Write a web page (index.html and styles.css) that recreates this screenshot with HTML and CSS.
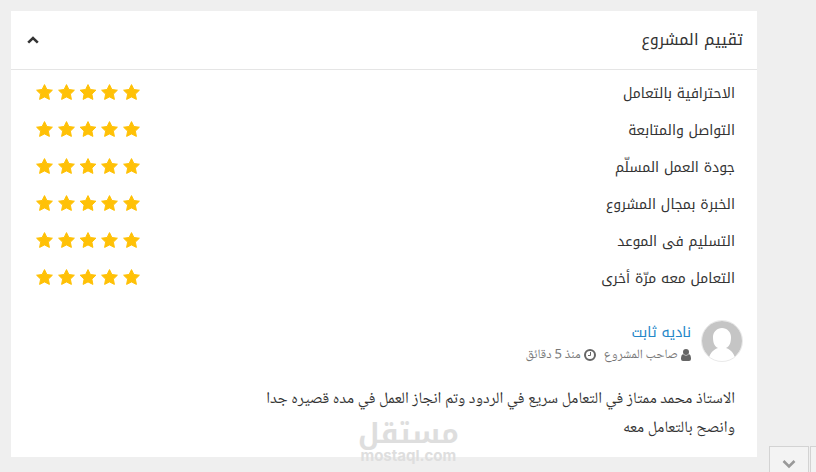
FILE: index.html
```html
<!DOCTYPE html>
<html lang="ar" dir="rtl">
<head>
<meta charset="utf-8">
<title>تقييم المشروع</title>
<link rel="stylesheet" href="styles.css">
</head>
<body>
<svg class="symbols" aria-hidden="true">
  <symbol id="star" viewBox="0 0 17 16"><path stroke-linejoin="round" stroke="#ffc107" d="M8.5 .6 L10.9 5.5 L16.4 6.2 L12.4 10.1 L13.4 15.4 L8.5 12.9 L3.6 15.4 L4.6 10.1 L.6 6.2 L6.1 5.5 Z"/></symbol>
  <symbol id="stars" viewBox="0 0 104 16">
    <use href="#star" x="0" width="17" height="16"/><use href="#star" x="22" width="17" height="16"/><use href="#star" x="43.5" width="17" height="16"/><use href="#star" x="65" width="17" height="16"/><use href="#star" x="87" width="17" height="16"/>
  </symbol>
</svg>
<main class="card">
  <header class="card-header">
    <h1 class="title">تقييم المشروع</h1>
    <button class="collapse" type="button" aria-label="طي">
      <svg width="12" height="8" viewBox="0 0 12 8"><path d="M1.2 6.6 L6 2 L10.8 6.6"/></svg>
    </button>
  </header>
  <ul class="ratings">
    <li class="rating"><span>الاحترافية بالتعامل</span><svg class="stars"><use href="#stars"/></svg></li>
    <li class="rating"><span>التواصل والمتابعة</span><svg class="stars"><use href="#stars"/></svg></li>
    <li class="rating"><span>جودة العمل المسلّم</span><svg class="stars"><use href="#stars"/></svg></li>
    <li class="rating"><span>الخبرة بمجال المشروع</span><svg class="stars"><use href="#stars"/></svg></li>
    <li class="rating"><span>التسليم فى الموعد</span><svg class="stars"><use href="#stars"/></svg></li>
    <li class="rating"><span>التعامل معه مرّة أخرى</span><svg class="stars"><use href="#stars"/></svg></li>
  </ul>
  <section class="review">
    <div class="author">
      <svg class="avatar" viewBox="0 0 42 42">
        <clipPath id="round"><circle cx="21" cy="21" r="20"/></clipPath>
        <circle cx="21" cy="21" r="20.5" fill="#fff" stroke="#e9e9e9"/>
        <g clip-path="url(#round)"><path fill="#c5c5c5" d="M0 0H42V42H35C34 35 31 30 25 28C29 26 30 22 30 17C30 12 26 8 21 8S12 12 12 17C12 22 13 26 17 28C11 30 8 35 7 42H0Z"/></g>
      </svg>
      <div class="who">
        <a class="name" href="#">ناديه ثابت</a>
        <div class="meta">
          <span class="meta-item"><svg width="10" height="12" viewBox="0 0 10 12"><circle cx="5" cy="3" r="3"/><path d="M2 5Q5 8 8 5Q10 6 10 9V10Q10 12 8 12H2Q0 12 0 10V9Q0 6 2 5Z"/></svg>صاحب المشروع</span>
          <span class="meta-item"><svg class="clock" width="12" height="12" viewBox="0 0 12 12"><circle cx="6" cy="6" r="5"/><path d="M6.5 3V6.5H4"/></svg>منذ 5 دقائق</span>
        </div>
      </div>
    </div>
    <p class="comment">الاستاذ محمد ممتاز في التعامل سريع في الردود وتم انجاز العمل في مده قصيره جدا<br>وانصح بالتعامل معه</p>
  </section>
  <div class="watermark"><span class="mark-ar">مستقل</span><span class="mark-en">mostaql.com</span></div>
</main>
<div class="dock">
  <button class="dock-button" type="button" aria-label="أسفل"><svg width="14" height="10" viewBox="0 0 14 10"><path d="M1.5 2 L7 7.5 L12.5 2"/></svg></button>
  <span class="dock-panel"></span>
</div>
</body>
</html>
```
FILE: styles.css
```css
* { box-sizing: border-box; }
body {
  margin: 0;
  padding: 11px 59px 0 11px;
  min-height: 100vh;
  overflow: hidden;
  background: #efefef;
  color: #333;
  font-family: "Noto Kufi Arabic", "Noto Sans", "DejaVu Sans", sans-serif;
  font-size: 14px;
}
.symbols { position: absolute; width: 0; height: 0; }
.card { position: relative; background: #fff; padding-bottom: 14px; }
.card-header {
  display: flex;
  align-items: center;
  justify-content: space-between;
  height: 59px;
  padding: 0 14px 0 16px;
  border-bottom: 1px solid #e5e5e5;
}
.title { margin: 0; padding-bottom: 2px; font-size: 16px; font-weight: 400; }
button { font: inherit; padding: 0; cursor: pointer; }
.collapse { display: flex; border: 0; background: none; }
.collapse path { fill: none; stroke: #333; stroke-width: 2.6; }
.ratings { list-style: none; margin: 0; padding: 5px 22px 0 25px; }
.rating { display: flex; align-items: center; justify-content: space-between; height: 37px; }
.stars { width: 104px; height: 16px; margin-bottom: 3px; fill: #ffc107; }
.review { padding: 11px 14px 0; }
.author { display: flex; gap: 10px; padding-top: 12px; }
.avatar { width: 42px; height: 42px; }
.name { display: block; color: #2386c8; text-decoration: none; line-height: 25px; }
.meta { display: flex; gap: 8px; color: #777; font-family: "Noto Naskh Arabic UI", "Noto Naskh Arabic", "Noto Sans", sans-serif; font-size: 13px; line-height: 20px; }
.meta-item { display: flex; align-items: center; gap: 3px; }
.meta svg { fill: #666; }
.meta .clock { fill: none; stroke: #666; stroke-width: 2; }
.clock path { stroke-width: 1; }
.comment { margin: 20px 8px 0; font-family: "Noto Naskh Arabic UI", "Noto Naskh Arabic", "Noto Sans", sans-serif; font-size: 16px; line-height: 29px; }
.watermark {
  position: absolute;
  left: 347px;
  bottom: -7px;
  display: flex;
  flex-direction: column;
  align-items: center;
  color: #dedede;
  font-weight: 700;
}
.mark-ar { font-size: 28px; line-height: 28px; }
.mark-en { font-family: Inter, sans-serif; font-size: 15px; line-height: 16px; }
.dock { position: fixed; left: 769px; right: 0; bottom: 0; height: 26px; display: flex; flex-direction: row-reverse; justify-content: flex-end; gap: 1px; direction: rtl; }
.dock-button { display: flex; justify-content: center; align-items: flex-end; width: 40px; padding-bottom: 3px; border: 1px solid #d3d3d3; border-bottom: 0; background: #f3f3f3; }
.dock-button path { fill: none; stroke: #999; stroke-width: 2.6; }
.dock-panel { flex: 1; border: 1px solid #d3d3d3; border-width: 1px 0 0 1px; background: #f3f3f3; }
```
